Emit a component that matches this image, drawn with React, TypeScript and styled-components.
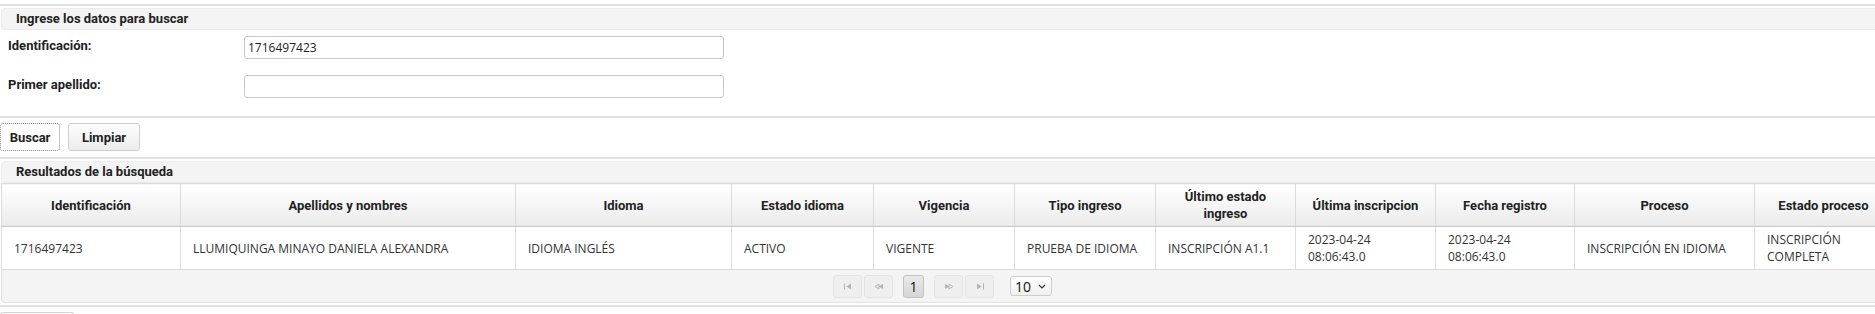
import React from 'react'
import styled, { createGlobalStyle } from 'styled-components'

const Global = createGlobalStyle`
    html, body {
        margin: 0;
        padding: 0;
        background: #fff;
        overflow: hidden;
    }
    body {
        font-family: "Open Sans", "Noto Sans", sans-serif;
        font-size: 12px;
        color: #333;
    }
`

const Page = styled.div`
    width: 1892px;
    padding-top: 4px;
`

const Rule = styled.div`
    height: 2px;
    background: #e0e0e0;
`

const PanelHeader = styled.div`
    height: 20px;
    margin: 2px 0 0 1px;
    padding-left: 14px;
    background: #f4f4f4;
    border: 1px solid #ebebeb;
    border-radius: 4px;
    font-family: Roboto, "Liberation Sans", sans-serif;
    font-weight: 700;
    font-size: 13px;
    line-height: 20px;
    color: #222;
`

const FormGrid = styled.div`
    display: grid;
    grid-template-columns: 236px 480px;
    row-gap: 16px;
    align-items: center;
    padding: 6px 0 18px 8px;
`

const Label = styled.label`
    font-family: Roboto, "Liberation Sans", sans-serif;
    font-weight: 700;
    font-size: 13px;
    color: #222;
    margin-top: -4px;
`

const Input = styled.input`
    box-sizing: border-box;
    height: 23px;
    width: 480px;
    padding: 0 3px;
    border: 1px solid #c9c9c9;
    border-radius: 3px;
    font-family: "Open Sans", sans-serif;
    font-size: 12px;
    color: #222;
    outline: none;
`

const ButtonBar = styled.div`
    display: flex;
    gap: 8px;
    padding: 5px 0 6px 0;
`

const Button = styled.button<{ $focused?: boolean; $width: number }>`
    box-sizing: border-box;
    width: ${p => p.$width}px;
    height: 28px;
    padding: 0;
    border: 1px ${p => (p.$focused ? 'dotted #8a8a8a' : 'solid #cfcfcf')};
    border-radius: 3px;
    background: ${p => (p.$focused ? '#fff' : 'linear-gradient(#fdfdfd, #ececec)')};
    font-family: Roboto, "Liberation Sans", sans-serif;
    font-weight: 700;
    font-size: 13px;
    color: #222;
`

const Table = styled.table`
    border-collapse: collapse;
    table-layout: fixed;
    width: 1891px;
    margin-left: 1px;
`

const Th = styled.th`
    height: 42px;
    padding: 0 6px;
    background: linear-gradient(#ffffff, #ebebeb);
    border: 1px solid #dadada;
    border-bottom: 1px solid #c6c6c6;
    font-family: Roboto, "Liberation Sans", sans-serif;
    font-weight: 700;
    font-size: 13px;
    line-height: 17px;
    color: #222;
    text-align: center;
`

const Td = styled.td`
    height: 42px;
    padding: 0 12px;
    border: 1px solid #dcdcdc;
    font-size: 12px;
    line-height: 17px;
    color: #333;
    background: #fff;
`

const Paginator = styled.div`
    display: flex;
    justify-content: center;
    align-items: center;
    gap: 2px;
    height: 32px;
    margin-left: 1px;
    padding-right: 8px;
    background: #f4f4f4;
    border: 1px solid #e2e2e2;
    border-top: none;
    border-radius: 0 0 4px 4px;
`

const PageButton = styled.span<{ $active?: boolean; $gap?: number }>`
    box-sizing: border-box;
    display: inline-flex;
    align-items: center;
    justify-content: center;
    width: ${p => (p.$active ? 21 : 29)}px;
    height: 23px;
    margin-left: ${p => p.$gap || 0}px;
    border: 1px solid ${p => (p.$active ? '#c2c2c2' : '#e4e4e4')};
    border-radius: 3px;
    background: ${p => (p.$active ? 'linear-gradient(#e9e9e9, #d6d6d6)' : '#efefef')};
    color: #aaa;
    font-size: 14px;
    color: ${p => (p.$active ? '#111' : '#b0b0b0')};
`

const Select = styled.span`
    box-sizing: border-box;
    display: inline-flex;
    align-items: center;
    gap: 7px;
    width: 42px;
    height: 20px;
    margin-left: 14px;
    padding-left: 4px;
    border: 1px solid #cdcdcd;
    border-radius: 3px;
    background: linear-gradient(#ffffff, #f0f0f0);
    font-size: 14px;
    color: #111;
`

const GhostButton = styled.div`
    width: 72px;
    height: 10px;
    border: 1px solid #d4d4d4;
    border-bottom: none;
    border-radius: 3px 3px 0 0;
    background: linear-gradient(#fdfdfd, #f3f3f3);
`

const Arrow = ({ kind }: { kind: 'first' | 'prev' | 'next' | 'last' }) => {
    const flip = kind === 'next' || kind === 'last'
    return (
        <svg width="10" height="7" viewBox="0 0 10 7" style={{ transform: flip ? 'scaleX(-1)' : undefined }}>
            {kind === 'first' || kind === 'last' ? (
                <>
                    <rect x="1" y="0.5" width="1" height="6" fill="#b4b4b4" />
                    <path d="M3.5 3.5 L8 0.5 L8 6.5 Z" fill="#b4b4b4" />
                </>
            ) : (
                <>
                    <path d="M1 3.5 L5 1 L5 6 Z" fill="none" stroke="#b4b4b4" strokeWidth="0.9" />
                    <path d="M4.5 3.5 L9 1 L9 6 Z" fill="#b4b4b4" />
                </>
            )}
        </svg>
    )
}

const columns = [
    { title: 'Identificación', width: 179 },
    { title: 'Apellidos y nombres', width: 335 },
    { title: 'Idioma', width: 216 },
    { title: 'Estado idioma', width: 142 },
    { title: 'Vigencia', width: 141 },
    { title: 'Tipo ingreso', width: 141 },
    { title: 'Último estado ingreso', width: 140 },
    { title: 'Última inscripcion', width: 140 },
    { title: 'Fecha registro', width: 139 },
    { title: 'Proceso', width: 180 },
    { title: 'Estado proceso', width: 138 },
]

const row = [
    '1716497423',
    'LLUMIQUINGA MINAYO DANIELA ALEXANDRA',
    'IDIOMA INGLÉS',
    'ACTIVO',
    'VIGENTE',
    'PRUEBA DE IDIOMA',
    'INSCRIPCIÓN A1.1',
    '2023-04-24 08:06:43.0',
    '2023-04-24 08:06:43.0',
    'INSCRIPCIÓN EN IDIOMA',
    'INSCRIPCIÓN COMPLETA',
]

export default function App() {
    return (
        <Page>
            <Global />
            <Rule />
            <PanelHeader>Ingrese los datos para buscar</PanelHeader>
            <FormGrid>
                <Label>Identificación:</Label>
                <Input defaultValue="1716497423" />
                <Label>Primer apellido:</Label>
                <Input />
            </FormGrid>
            <Rule />
            <ButtonBar>
                <Button $focused $width={60}>Buscar</Button>
                <Button $width={72}>Limpiar</Button>
            </ButtonBar>
            <Rule />
            <PanelHeader>Resultados de la búsqueda</PanelHeader>
            <Table>
                <colgroup>
                    {columns.map(c => <col key={c.title} style={{ width: c.width }} />)}
                </colgroup>
                <thead>
                    <tr>
                        {columns.map(c => <Th key={c.title}>{c.title}</Th>)}
                    </tr>
                </thead>
                <tbody>
                    <tr>
                        {row.map((v, i) => <Td key={i}>{v}</Td>)}
                    </tr>
                </tbody>
            </Table>
            <Paginator>
                <PageButton><Arrow kind="first" /></PageButton>
                <PageButton><Arrow kind="prev" /></PageButton>
                <PageButton $active $gap={8}>1</PageButton>
                <PageButton $gap={8}><Arrow kind="next" /></PageButton>
                <PageButton><Arrow kind="last" /></PageButton>
                <Select>
                    10
                    <svg width="8" height="5" viewBox="0 0 8 5">
                        <path d="M1 1 L4 4 L7 1" fill="none" stroke="#333" strokeWidth="1.2" />
                    </svg>
                </Select>
            </Paginator>
            <div style={{ height: 2 }} />
            <Rule />
            <ButtonBar>
                <GhostButton />
            </ButtonBar>
        </Page>
    )
}
